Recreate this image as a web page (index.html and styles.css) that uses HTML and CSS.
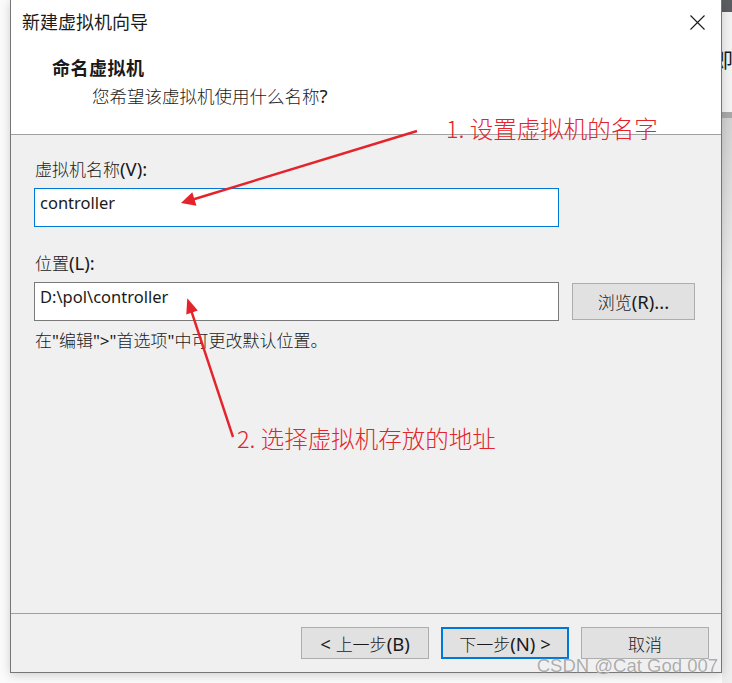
FILE: index.html
```html
<!DOCTYPE html>
<html lang="zh-CN">
<head>
  <meta charset="UTF-8" />
  <title>新建虚拟机向导</title>
  <meta name="viewport" content="width=device-width, initial-scale=1.0" />
  <link rel="stylesheet" href="styles.css">
</head>
<body>

  <div class="screen">
    <div class="gutter"></div>

    <!-- Wizard window -->
    <div class="wizard">
      <div class="wizard-head">
        <div class="title-bar">
          <span class="title">新建虚拟机向导</span>
          <svg class="close" width="15" height="15" viewBox="0 0 15 15">
            <path d="M0.5 0.5 L14.5 14.5 M14.5 0.5 L0.5 14.5" stroke="#1a1a1a" stroke-width="1.1" fill="none" />
          </svg>
        </div>
        <div class="step-title">命名虚拟机</div>
        <div class="step-desc">您希望该虚拟机使用什么名称<span class="lat">?</span></div>
      </div>

      <div class="wizard-body">
        <div class="field-label">虚拟机名称<span class="lat">(V):</span></div>
        <div class="text-box focused">controller</div>

        <div class="field-label location">位置<span class="lat">(L):</span></div>
        <div class="path-row">
          <div class="text-box">D:\pol\controller</div>
          <button class="btn browse">浏览<span class="lat">(R)...</span></button>
        </div>

        <p class="hint">在<span class="lat">"</span>编辑<span class="lat">"&gt;"</span>首选项<span class="lat">"</span>中可更改默认位置。</p>
      </div>

      <div class="wizard-foot">
        <button class="btn"><span class="lat">&lt; </span>上一步<span class="lat">(B)</span></button>
        <button class="btn primary">下一步<span class="lat">(N) &gt;</span></button>
        <button class="btn">取消</button>
      </div>
    </div>

    <!-- window behind the wizard -->
    <div class="backdrop">
      <div class="backdrop-bar"></div>
      <div class="backdrop-panel"><span class="backdrop-char">即</span></div>
      <div class="backdrop-edge"></div>
      <div class="backdrop-rest"></div>
    </div>
  </div>

  <!-- Annotations drawn on top of the screenshot -->
  <svg class="arrows" width="732" height="683" viewBox="0 0 732 683">
    <line x1="417" y1="131" x2="193" y2="199.5" stroke="#e4242a" stroke-width="2.4" />
    <polygon points="181,203 196.5,205.8 192.3,192.2" fill="#e4242a" />
    <line x1="233" y1="437" x2="191" y2="310" stroke="#e4242a" stroke-width="2.4" />
    <polygon points="187.3,298.3 197.8,310.6 186.3,314.4" fill="#e4242a" />
  </svg>
  <div class="note note-name">1. 设置虚拟机的名字</div>
  <div class="note note-path">2. 选择虚拟机存放的地址</div>

  <div class="watermark">CSDN @Cat God 007</div>

</body>
</html>
```

FILE: styles.css
```css
body, p {
  margin: 0;
  padding: 0;
}

body {
  font-family: "Noto Sans", "Noto Sans CJK SC", sans-serif;
  background: #fbfbfb;
  color: #1a1a1a;
  width: 732px;
  height: 683px;
  overflow: hidden;
  position: relative;
}

.screen {
  display: flex;
  height: 683px;
}

.gutter {
  width: 10px;
  flex-shrink: 0;
}

/* latin bits of the dialog text (Segoe UI looks a size bigger) */
.lat {
  font-family: "Noto Sans", sans-serif;
  font-size: 18.5px;
  font-weight: 400;
  line-height: 1;
}

/* wizard window */
.wizard {
  width: 712px;
  height: 673px;
  flex-shrink: 0;
  box-sizing: border-box;
  border: 1px solid #767676;
  border-top: none;
  background: #f0f0f0;
  display: flex;
  flex-direction: column;
  box-shadow: 0 2px 10px rgba(0, 0, 0, 0.18);
  position: relative;
  z-index: 1;
}

.wizard-head {
  height: 134px;
  flex-shrink: 0;
  background: #fff;
  border-bottom: 1px solid #a0a0a0;
}

.title-bar {
  height: 44px;
  display: flex;
  align-items: center;
  justify-content: space-between;
  padding: 0 16px 0 11px;
}

.title {
  font-size: 18px;
  line-height: 44px;
}

.close {
  display: block;
  margin-top: 1px;
}

.step-title {
  margin-top: 10px;
  padding-left: 41px;
  font-size: 18px;
  line-height: 28px;
  font-weight: 700;
  letter-spacing: 0.5px;
}

.step-desc {
  margin-top: 2px;
  padding-left: 81px;
  font-size: 17.5px;
  line-height: 24px;
  font-weight: 300;
}

.wizard-body {
  flex: 1;
  padding: 23px 0 0 23px;
}

.field-label {
  font-size: 17px;
  line-height: 24px;
  height: 24px;
  margin-left: 1px;
  font-weight: 300;
}

.field-label.location {
  margin-top: 25px;
}

.text-box {
  width: 525px;
  height: 39px;
  box-sizing: border-box;
  margin-top: 6px;
  padding: 4px 0 0 5px;
  background: #fff;
  border: 1px solid #7a7a7a;
  font-size: 16.5px;
  line-height: 20px;
}

.text-box.focused {
  border-color: #0078d7;
}

.path-row {
  display: flex;
  align-items: flex-start;
  gap: 13px;
  margin-top: 6px;
}

.path-row .text-box {
  margin-top: 0;
}

.btn {
  font-family: "Noto Sans", "Noto Sans CJK SC", sans-serif;
  font-size: 17px;
  font-weight: 300;
  color: #1a1a1a;
  background: #e1e1e1;
  border: 1px solid #adadad;
  padding: 0;
  margin: 0;
  cursor: pointer;
}

.browse {
  width: 123px;
  height: 37px;
  margin-top: 1px;
}

.hint {
  margin-top: 8px;
  margin-left: 1px;
  font-size: 17px;
  line-height: 24px;
  font-weight: 300;
}

.hint .lat {
  font-size: 17px;
}

.wizard-foot {
  flex-shrink: 0;
  border-top: 1px solid #a0a0a0;
  display: flex;
  justify-content: flex-end;
  gap: 12px;
  padding: 13px 12px 0 0;
  box-sizing: border-box;
  height: 59px;
}

.wizard-foot .btn {
  width: 128px;
  height: 32px;
}

.wizard-foot .primary {
  border: 2px solid #0078d7;
}

/* the window peeking out on the right */
.backdrop {
  flex: 1;
  display: flex;
  flex-direction: column;
}

.backdrop-bar {
  height: 12px;
  background: #5b5f64;
}

.backdrop-panel {
  height: 100px;
  background: #f3f3f3;
  overflow: hidden;
  position: relative;
}

.backdrop-char {
  position: absolute;
  top: 37px;
  left: -9px;
  font-size: 20px;
  line-height: 24px;
}

.backdrop-edge {
  height: 6px;
  background: #a9a9a9;
}

.backdrop-rest {
  flex: 1;
  background: linear-gradient(#d2d2d2, #ececec 30%, #eeeeee);
}

/* annotations */
.arrows {
  position: absolute;
  top: 0;
  left: 0;
  z-index: 2;
}

.note {
  position: absolute;
  z-index: 3;
  color: #e4242a;
  font-family: "Noto Sans CJK SC", sans-serif;
  font-size: 23.5px;
  font-weight: 300;
  line-height: 24px;
  white-space: nowrap;
}

.note-name {
  top: 116px;
  left: 446px;
}

.note-path {
  top: 426px;
  left: 237px;
}

.watermark {
  position: absolute;
  z-index: 3;
  right: 14px;
  top: 656px;
  font-family: "Liberation Sans", sans-serif;
  font-size: 18.5px;
  line-height: 20px;
  color: rgba(150, 150, 150, 0.8);
  text-shadow: 0 0 1px #fff;
}
```
